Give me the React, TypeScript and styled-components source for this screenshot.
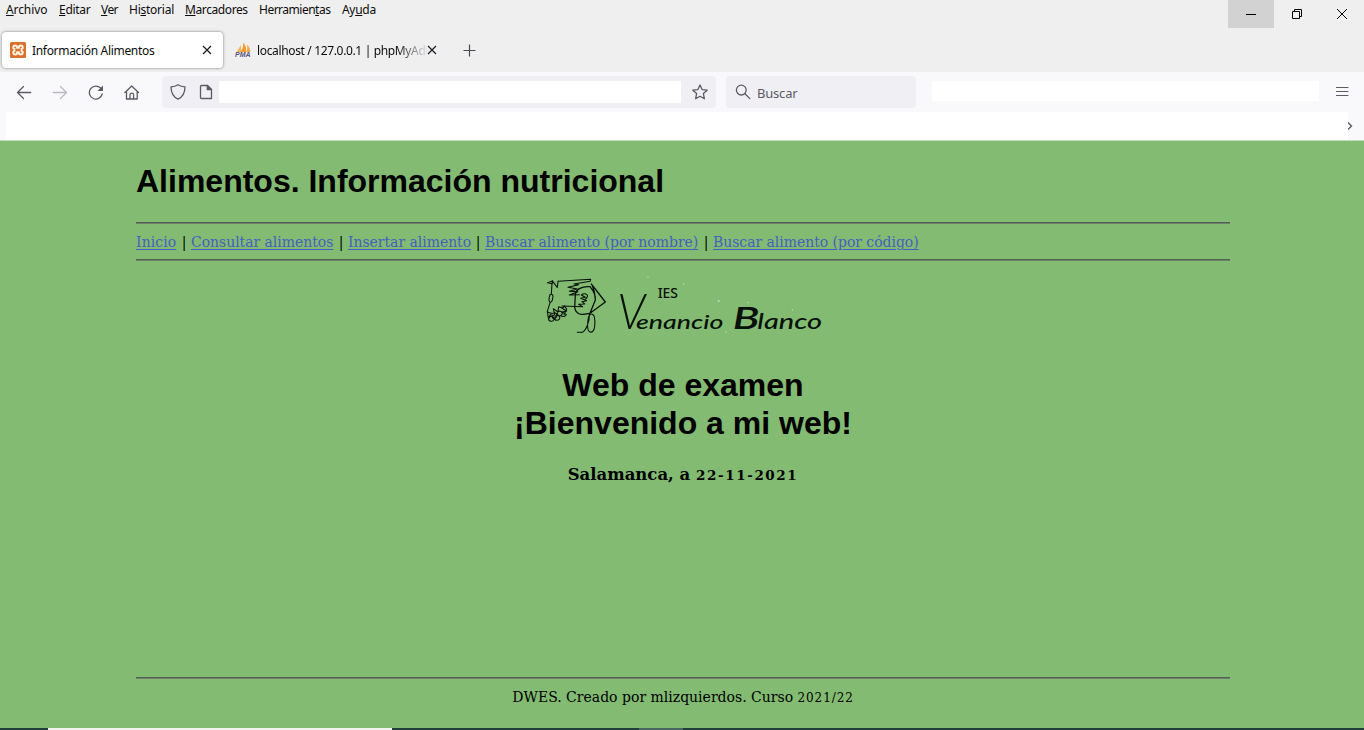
import React from "react";
import styled, { createGlobalStyle } from "styled-components";

const Global = createGlobalStyle`
  * { box-sizing: border-box; }
  body { margin: 0; overflow: hidden; }
`;

const ui = `"Noto Sans", "Open Sans", sans-serif`;
const serif = `"DejaVu Serif", serif`;

const Window = styled.div`
  width: 1364px;
  height: 730px;
  display: flex;
  flex-direction: column;
  background: #efefef;
  font-family: ${ui};
  color: #0c0c0d;
`;

const TitleBar = styled.div`
  height: 28px;
  display: flex;
  justify-content: space-between;
`;

const Menu = styled.nav`
  display: flex;
  gap: 12px;
  padding: 1px 0 0 6px;
  font-size: 12px;
  line-height: 17px;
  white-space: nowrap;
`;

const MenuItem = styled.span<{ $w: number; $ls: number }>`
  width: ${(p) => p.$w}px;
  letter-spacing: ${(p) => p.$ls}px;
  u { text-underline-offset: 1px; }
`;

const WindowButtons = styled.div`
  display: flex;
`;

const WindowButton = styled.button<{ $active?: boolean; $w?: number }>`
  width: ${(p) => p.$w ?? 46}px;
  height: 28px;
  padding: 0;
  border: 0;
  display: flex;
  align-items: center;
  justify-content: center;
  background: ${(p) => (p.$active ? "#d2d2d2" : "transparent")};
`;

const TabStrip = styled.div`
  height: 44px;
  display: flex;
  align-items: center;
  padding: 0 0 0 2px;
`;

const Tab = styled.div<{ $active?: boolean; $w: number }>`
  width: ${(p) => p.$w}px;
  height: 36px;
  margin-top: 0;
  padding: 0 11px 0 8px;
  display: flex;
  align-items: center;
  border-radius: 4px;
  font-size: 12px;
  background: ${(p) => (p.$active ? "#fff" : "transparent")};
  box-shadow: ${(p) => (p.$active ? "0 0 3px rgba(0, 0, 0, 0.5)" : "none")};
`;

const TabTitle = styled.span<{ $fade?: boolean; $ls: number }>`
  flex: 1;
  min-width: 0;
  margin-left: 6px;
  overflow: hidden;
  white-space: nowrap;
  letter-spacing: ${(p) => p.$ls}px;
  mask-image: ${(p) =>
    p.$fade ? "linear-gradient(to right, #000 82%, transparent 101%)" : "none"};
`;

const NewTab = styled.div`
  display: flex;
  margin: 1px 0 0 15px;
`;

const Toolbar = styled.div`
  height: 40px;
  display: flex;
  align-items: center;
  background: #f9f9fb;
  color: #5b5b66;
`;

const NavButtons = styled.div`
  width: 162px;
  display: flex;
  gap: 20px;
  padding-left: 16px;
  svg { flex: none; }
`;

const AddressBar = styled.div`
  width: 554px;
  height: 32px;
  display: flex;
  align-items: center;
  gap: 12px;
  padding: 0 8px;
  border-radius: 4px;
  background: #f0f0f4;
`;

const AddressInput = styled.div`
  flex: 1;
  height: 22px;
  margin: 0 -1px 0 -7px;
  background: #fff;
`;

const SearchBox = styled.div`
  width: 190px;
  height: 32px;
  margin-left: 10px;
  padding-left: 9px;
  display: flex;
  align-items: center;
  gap: 6px;
  border-radius: 4px;
  background: #f0f0f4;
  font-size: 13px;
  letter-spacing: -0.2px;
  span { padding-top: 2px; }
`;

const BlankStrip = styled.div`
  width: 387px;
  height: 20px;
  margin: -2px 15px 0 16px;
  background: #fff;
`;

const Bookmarks = styled.div`
  height: 29px;
  display: flex;
  justify-content: space-between;
  align-items: center;
  padding-left: 6px;
  background: #f9f9fb;
  border-bottom: 1px solid #c3dfba;
`;

const BookmarkArea = styled.div`
  width: 1342px;
  height: 100%;
  background: #fff;
`;

const ChevronHolder = styled.div`
  width: 16px;
  display: flex;
`;

const Page = styled.main`
  flex: 1;
  display: flex;
  flex-direction: column;
  padding: 0 134px 0 136px;
  background: #82bb71;
  color: #000;
  font-family: ${serif};
`;

const Heading = styled.h1`
  margin: 21px 0 22px;
  font: bold 32px/38px "Liberation Sans", Arial, sans-serif;
`;

const Rule = styled.hr`
  width: 100%;
  height: 2px;
  margin: 0;
  border: 0;
  border-top: 1px solid #565d56;
  border-bottom: 1px solid #6b8266;
`;

const Links = styled.nav`
  height: 35px;
  display: flex;
  align-items: center;
  font-size: 14px;
  padding-top: 1px;
  white-space: nowrap;
`;

const Link = styled.a<{ $w: number; $ls: number }>`
  width: ${(p) => p.$w}px;
  color: #465fc0;
  letter-spacing: ${(p) => p.$ls}px;
  text-decoration: underline;
  text-decoration-thickness: 1px;
  text-underline-offset: 2px;
`;

const Separator = styled.span`
  width: 14px;
  text-align: center;
`;

const Welcome = styled.section`
  flex: 1;
  display: flex;
  flex-direction: column;
  align-items: center;
  padding-top: 7px;
`;

const WelcomeTitle = styled.h1`
  margin: 23px 0 0;
  text-align: center;
  font: bold 32px/38px "Liberation Sans", Arial, sans-serif;
`;

const DateLine = styled.h3`
  margin: 22px 0 0;
  font-size: 16.5px;
  line-height: 22px;
  white-space: nowrap;
`;

const OldStyle = styled.span<{ $size: number; $ls: number }>`
  font-size: ${(p) => p.$size}px;
  letter-spacing: ${(p) => p.$ls}px;
`;

const Footer = styled.footer`
  height: 49px;
  padding-top: 8px;
  text-align: center;
  font-size: 14px;
  line-height: 20px;
`;

const Taskbar = styled.div`
  height: 2px;
  display: flex;
  background: #203f3b;
`;

const TaskItem = styled.div<{ $w: number; $gap: number; $color: string }>`
  width: ${(p) => p.$w}px;
  margin-left: ${(p) => p.$gap}px;
  background: ${(p) => p.$color};
`;

const Icon = ({ size = 16, w = 1.3, children, ...rest }: any) => (
  <svg width={size} height={size} viewBox="0 0 16 16" fill="none" stroke="currentColor"
    strokeWidth={w} strokeLinecap="round" strokeLinejoin="round" {...rest}>
    {children}
  </svg>
);

const CloseIcon = () => (
  <svg width="10" height="10" viewBox="0 0 10 10" stroke="#1c1b22" strokeWidth="1.2">
    <path d="M1 1l8 8M9 1l-8 8" />
  </svg>
);

const XamppIcon = () => (
  <svg width="16" height="16" viewBox="0 0 16 16">
    <rect width="16" height="16" rx="1.5" fill="#d9702b" />
    <path d="M5.2 3.600c-2.200 0-2.800 2.600-.8 3.400v2c-2 .8-1.400 3.400.8 3.400 1.600 0 2-1.200 2-2.200h1.600c0 1 .4 2.200 2 2.200 2.200 0 2.800-2.600.8-3.400V7c2-.8 1.400-3.400-.8-3.400-1.600 0-2 1.200-2 2.200H7.200c0-1-.4-2.200-2-2.200z"
      fill="none" stroke="#fff3e4" strokeWidth="2" />
  </svg>
);

const PmaIcon = () => (
  <svg width="16" height="16" viewBox="0 0 16 16">
    <path d="M1.500 10L6 3v7z" fill="#f3b45c" />
    <path d="M5 10C8 7 8.500 4 8 .5c3 3 3.500 6 3 9.500z" fill="#f39a2c" />
    <path d="M11 10c1.500-2 1.500-5 1-7.500 2.500 2 3 5 3.500 7.500z" fill="#f6a843" />
    <text x="0" y="15" fontSize="6.500" fontWeight="700" fontStyle="italic" fontFamily="Liberation Sans"
      fill="#55557f" textLength="15.500" lengthAdjust="spacingAndGlyphs">PMA</text>
  </svg>
);

const SchoolLogo = () => (
  <svg width="294" height="75" viewBox="0 0 882 225" fill="none" stroke="#07100a" strokeLinecap="round" strokeLinejoin="round">
    <g strokeWidth="3.2" transform="translate(12 12)">
      <path d="M24 32l14-6-2 9-13-3M38 28l14 18 2-18 98-6-2 6-48 8 14 2-32 8 28 5-24 7 26 1-26 10 30-1" />
      <path d="M36 34l-2 32M30 68c7-4 11 2 8 12-2 13-11 14-11 3 0-6 2-11 3-15M30 92l-8 26 3 20" />
      <path d="M22 120l12 4-8 12 18-8-4-18 14 10 2-16 12 4 6-6 6 10-8 16" />
      <path d="M26 138c-2 10 12 14 16 4 2-8-12-14-14-4M36 126c6-8 18-2 14 8-3 9-14 8-13-1M42 140c6 9 20 4 17-5-4-8-16-4-14 2M52 120c6-6 18 0 14 7-4 8-14 4-14-3M62 130c5 6 15 4 17-2l-13-8 14-3-14-8" />
      <path d="M66 102l62 2-12-7 18-1-8-7 14-3-18-7 14-3-12-7c8-7 21-3 18 5-1 5-6 8-8 9" />
      <path d="M150 44c-24-2-43 8-44 24l-2 38c1 16 14 23 26 21l20-3 16-40c2-18-8-30-16-40zM154 36l42 54-46 34M156 38c7 16 9 24 10 44" strokeWidth="3.8" />
      <path d="M148 124c2 24-12 58-24 57h-12M146 134c-4 17-6 42 4 46 15 4 17-26 13-46-4-10-12-12-17 0" />
    </g>
    <g fill="#07100a" stroke="none">
      <text x="365" y="90" fontFamily="Noto Sans" fontWeight="500" fontSize="41" textLength="61" lengthAdjust="spacingAndGlyphs">IES</text>
      <g fontFamily="Lato" fontStyle="italic">
        <text x="244" y="184" fontSize="150" fontWeight="300" textLength="84" lengthAdjust="spacingAndGlyphs">V</text>
        <text x="300" y="184" fontSize="60" fontWeight="500" textLength="262" lengthAdjust="spacingAndGlyphs">enancio</text>
        <text x="590" y="184" fontSize="90" fontWeight="600" textLength="80" lengthAdjust="spacingAndGlyphs">B</text>
        <text x="664" y="184" fontSize="62" fontWeight="500" textLength="194" lengthAdjust="spacingAndGlyphs">lanco</text>
      </g>
    </g>
    <g fill="#c5e2ba" stroke="none">
      <circle cx="443" cy="48" r="2" /><circle cx="548" cy="99" r="3" /><circle cx="570" cy="192" r="2" />
      <circle cx="636" cy="103" r="2" /><circle cx="769" cy="126" r="2" /><circle cx="336" cy="27" r="2" />
    </g>
  </svg>
);

const menu: [string, string, string, number, number][] = [
  ["", "A", "rchivo", 41, -0.1],
  ["", "E", "ditar", 30, -0.3],
  ["", "V", "er", 16, -0.6],
  ["Hi", "s", "torial", 44, -0.25],
  ["", "M", "arcadores", 62, -0.4],
  ["Herramien", "t", "as", 71, -0.5],
  ["Ay", "u", "da", 36, -0.3],
];

const links: [string, number, number][] = [
  ["Inicio", 41, 0.1],
  ["Consultar alimentos", 143, -0.04],
  ["Insertar alimento", 123, -0.04],
  ["Buscar alimento (por nombre)", 214, -0.04],
  ["Buscar alimento (por código)", 206, -0.04],
];

export default function App() {
  return (
    <Window>
      <Global />
      <TitleBar>
        <Menu>
          {menu.map(([a, b, c, w, ls]) => (
            <MenuItem key={a + b + c} $w={w} $ls={ls}>{a}<u>{b}</u>{c}</MenuItem>
          ))}
        </Menu>
        <WindowButtons>
          <WindowButton $active>
            <svg width="10" height="1"><rect width="10" height="1" fill="#000" /></svg>
          </WindowButton>
          <WindowButton>
            <svg width="10" height="10" fill="none" stroke="#000">
              <path d="M.5 2.500h7v7h-7zM2.500 2.500v-2h7v7h-2" />
            </svg>
          </WindowButton>
          <WindowButton $w={44}>
            <svg width="10" height="10" stroke="#000"><path d="M0 0l10 10M10 0L0 10" /></svg>
          </WindowButton>
        </WindowButtons>
      </TitleBar>

      <TabStrip>
        <Tab $active $w={221}>
          <XamppIcon />
          <TabTitle $ls={-0.32}>Información Alimentos</TabTitle>
          <CloseIcon />
        </Tab>
        <Tab $w={225}>
          <svg width="4" height="1" />
          <PmaIcon />
          <TabTitle $fade $ls={-0.35}>localhost / 127.0.0.1 | phpMyAdmin</TabTitle>
          <CloseIcon />
        </Tab>
        <NewTab>
          <svg width="13" height="13" stroke="#4a4a55" strokeWidth="1.200"><path d="M6.500 .5v12M.5 6.500h12" /></svg>
        </NewTab>
      </TabStrip>

      <Toolbar>
        <NavButtons>
          <Icon><path d="M1.500 8.500h13.200M7.500 2.500l-6 6 6 6" /></Icon>
          <Icon opacity="0.4"><path d="M14.500 8.500H1.300M8.500 2.500l6 6-6 6" /></Icon>
          <Icon>
            <path d="M14.200 10A6.500 6.500 0 1 1 12.500 4" />
            <path d="M15 1.500V7H9.500z" fill="currentColor" stroke="none" />
          </Icon>
          <Icon>
            <path d="M1 8.500L7.700 2l6.800 6.500M2.500 7.500V15h10.700V7.500M6 15v-4.200c0-2.200 3.600-2.200 3.600 0V15" />
          </Icon>
        </NavButtons>
        <AddressBar>
          <Icon><path d="M8 .8c2 1.500 4.500 2 7 2 0 5.500-2 10-7 12.400C3 12.800 1 8.300 1 2.800c2.500 0 5-.5 7-2z" /></Icon>
          <Icon>
            <path d="M3.500 1.500h6l4 4v9h-10c-.7 0-1-.3-1-1v-11c0-.7.300-1 1-1z" />
            <path d="M9.300 1.500v4.200h4.200z" fill="currentColor" />
          </Icon>
          <AddressInput />
          <Icon><path d="M8 .9l2.100 4.700 5.100.6-3.800 3.400 1 5.200L8 12.300l-4.400 2.500 1-5.200L.8 6.200l5.100-.6z" /></Icon>
        </AddressBar>
        <SearchBox>
          <Icon><circle cx="6.300" cy="6.100" r="4.900" /><path d="M10 9.800l4.800 4.800" /></Icon>
          <span>Buscar</span>
        </SearchBox>
        <BlankStrip />
        <Icon w={1.2}><path d="M2.500 3.500h11.500M2.500 7.500h11.500M2.500 11.500h11.500" /></Icon>
      </Toolbar>

      <Bookmarks>
        <BookmarkArea />
        <ChevronHolder>
          <svg width="6" height="8" fill="none" stroke="#5b5b66" strokeWidth="1.400"><path d="M0 .5L3.500 4 0 7.500" /></svg>
        </ChevronHolder>
      </Bookmarks>

      <Page>
        <Heading>Alimentos. Información nutricional</Heading>
        <Rule />
        <Links>
          {links.map(([label, w, ls], i) => (
            <React.Fragment key={label}>
              {i > 0 && <Separator>|</Separator>}
              <Link $w={w} $ls={ls}>{label}</Link>
            </React.Fragment>
          ))}
        </Links>
        <Rule />
        <Welcome>
          <SchoolLogo />
          <WelcomeTitle>Web de examen<br />¡Bienvenido a mi web!</WelcomeTitle>
          <DateLine>Salamanca, a <OldStyle $size={13.5} $ls={1.6}>22-11-2021</OldStyle></DateLine>
        </Welcome>
        <Rule />
        <Footer>DWES. Creado por mlizquierdos. Curso <OldStyle $size={12} $ls={0.9}>2021/22</OldStyle></Footer>
      </Page>

      <Taskbar>
        <TaskItem $w={344} $gap={48} $color="#f2f5ef" />
        <TaskItem $w={44} $gap={247} $color="#4a6660" />
      </Taskbar>
    </Window>
  );
}
